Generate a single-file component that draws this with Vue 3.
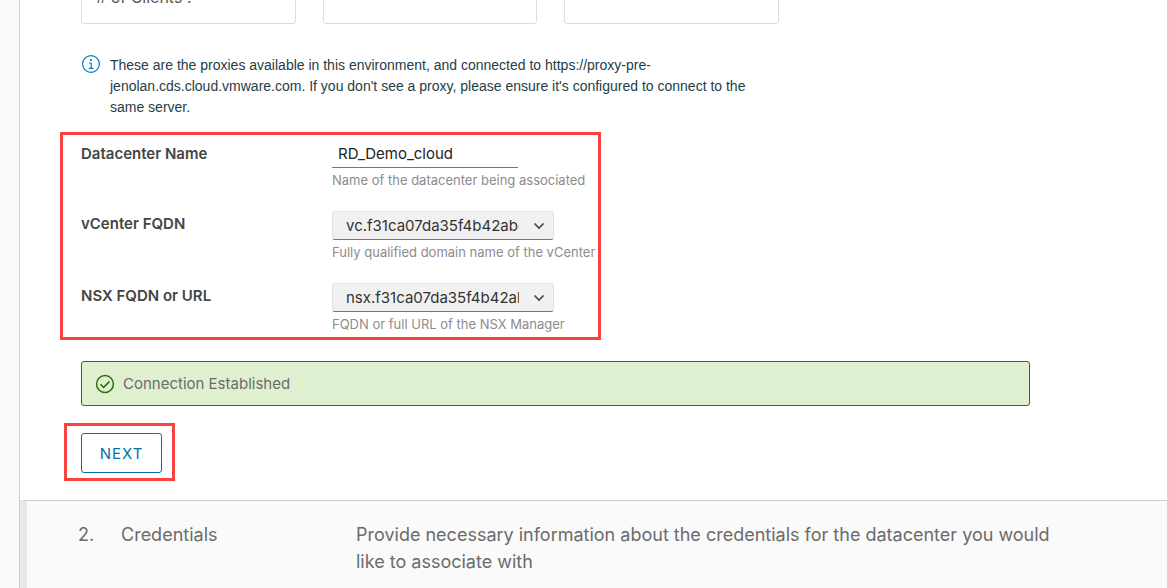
<script setup>
import { ref } from 'vue'

const proxies = ['# of Clients :', '', '']
const name = ref('RD_Demo_cloud')
const vcenter = ref('vc.f31ca07da35f4b42abe')
const nsx = ref('nsx.f31ca07da35f4b42abe')
</script>

<template>
  <div class="page">
    <main class="wizard">
      <section class="step">
        <div class="proxies">
          <div v-for="(label, i) in proxies" :key="i" class="proxy">{{ label }}</div>
        </div>

        <div class="hint">
          <svg class="icon" viewBox="0 0 20 20" aria-hidden="true">
            <circle cx="10" cy="10" r="8.4" fill="none" stroke="currentColor" stroke-width="1.2" />
            <circle cx="9.9" cy="6" r="1.1" fill="currentColor" />
            <path d="M8 9h2.2v5.2M7.8 14.4h4.6" fill="none" stroke="currentColor" stroke-width="1.2" />
          </svg>
          <p>These are the proxies available in this environment, and connected to https://proxy-pre-jenolan.cds.cloud.vmware.com. If you don't see a proxy, please ensure it's configured to connect to the same server.</p>
        </div>

        <form class="fields marked" @submit.prevent>
          <div class="field">
            <label for="dc-name">Datacenter Name</label>
            <div class="control">
              <input id="dc-name" v-model="name" type="text" />
              <span class="helper">Name of the datacenter being associated</span>
            </div>
          </div>
          <div class="field">
            <label for="vcenter">vCenter FQDN</label>
            <div class="control">
              <div class="select">
                <select id="vcenter" v-model="vcenter">
                  <option>vc.f31ca07da35f4b42abe</option>
                </select>
                <svg viewBox="0 0 12 8" aria-hidden="true"><path d="M1.5 1.5 6 6l4.5-4.5" /></svg>
              </div>
              <span class="helper">Fully qualified domain name of the vCenter</span>
            </div>
          </div>
          <div class="field">
            <label for="nsx">NSX FQDN or URL</label>
            <div class="control">
              <div class="select">
                <select id="nsx" v-model="nsx">
                  <option>nsx.f31ca07da35f4b42abe</option>
                </select>
                <svg viewBox="0 0 12 8" aria-hidden="true"><path d="M1.5 1.5 6 6l4.5-4.5" /></svg>
              </div>
              <span class="helper">FQDN or full URL of the NSX Manager</span>
            </div>
          </div>
        </form>

        <div class="alert" role="status">
          <svg class="icon" viewBox="0 0 20 20" aria-hidden="true">
            <circle cx="10" cy="10" r="8.4" fill="none" stroke="currentColor" stroke-width="1.5" />
            <path d="M5.4 10.3l3.2 3.1 6-6" fill="none" stroke="currentColor" stroke-width="1.5" />
          </svg>
          <span>Connection Established</span>
        </div>

        <div class="actions marked">
          <button type="button">NEXT</button>
        </div>
      </section>

      <section class="next-step">
        <span class="number">2.</span>
        <span class="title">Credentials</span>
        <p>Provide necessary information about the credentials for the datacenter you would like to associate with</p>
      </section>
    </main>
  </div>
</template>

<style>
body {
  background: #fafafa;
}
</style>

<style scoped>
.page {
  min-height: 100vh;
  display: flex;
  padding-left: 19px;
  font-family: Inter, "Noto Sans", sans-serif;
  font-size: 15px;
  color: #6b6b6b;
  box-sizing: border-box;
}
.wizard {
  flex: 1;
  display: flex;
  flex-direction: column;
  border-left: 1px solid #ccc;
}
.step {
  background: #fff;
  padding: 0 137px 19px 40px;
}
.proxies {
  display: flex;
  align-items: flex-end;
  gap: 27px;
  height: 24px;
  max-width: 698px;
  margin-left: 21px;
  overflow: hidden;
}
.proxy {
  flex: 1;
  height: 60px;
  padding: 22px 14px 0;
  font-size: 16px;
  line-height: 20px;
  box-sizing: border-box;
  border: 1px solid #ddd;
  border-radius: 3px;
  color: #565656;
}
.icon {
  width: 20px;
  height: 20px;
  flex: none;
}
.hint {
  display: flex;
  gap: 9px;
  max-width: 690px;
  margin: 30px 0 14px 21px;
}
.hint .icon {
  color: #0079b8;
}
.hint p {
  margin: 1px 0 0;
  font: 14px/21px "Liberation Sans", Arial, sans-serif;
  color: #253d47;
}
.marked {
  border: 3px solid #fc4141;
}
.fields {
  display: flex;
  flex-direction: column;
  gap: 18px;
  width: fit-content;
  padding: 6px 3px 0 18px;
}
.field {
  display: grid;
  grid-template-columns: 251px 1fr;
}
.field label {
  line-height: 26px;
  font-weight: 600;
  color: #454545;
}
.control {
  display: flex;
  flex-direction: column;
  align-items: flex-start;
}
input {
  width: 186px;
  height: 27px;
  padding: 0 6px 1px;
  box-sizing: border-box;
  border: 0;
  border-bottom: 1px solid #6a7a81;
  background: transparent;
  font: inherit;
  color: #222;
}
.select {
  position: relative;
}
select {
  display: block;
  width: 222px;
  height: 29px;
  padding: 0 34px 1px 13px;
  box-sizing: border-box;
  appearance: none;
  border: 1px solid #e2e2e2;
  border-bottom-color: #6a7a81;
  border-radius: 3px;
  background: #f1f1f1;
  font: inherit;
  color: #333;
}
.select svg {
  position: absolute;
  right: 9px;
  top: 11px;
  width: 12px;
  height: 8px;
  fill: none;
  stroke: #454545;
  stroke-width: 1.6;
  pointer-events: none;
}
.helper {
  font-size: 13px;
  line-height: 25px;
  color: #8c8c8c;
}
.alert {
  display: flex;
  align-items: center;
  gap: 8px;
  height: 45px;
  box-sizing: border-box;
  margin: 21px 0 17px 21px;
  padding: 0 13px;
  border: 1px solid #2f6f07;
  border-radius: 3px;
  background: #dff0d0;
}
.alert .icon {
  color: #2f6f07;
}
.actions {
  width: fit-content;
  margin-left: 4px;
  padding: 7px 10px 5px 14px;
}
button {
  display: block;
  min-width: 81px;
  height: 40px;
  padding: 0 17px;
  border: 1px solid #0072a3;
  border-radius: 3px;
  background: #fff;
  font: inherit;
  letter-spacing: 1px;
  color: #0072a3;
}
.next-step {
  flex: 1;
  display: flex;
  padding: 20px 96px 12px 51px;
  border-top: 1px solid #ccc;
  border-left: 7px solid #e8e8e8;
  font-size: 18px;
  line-height: 27px;
}
.number {
  width: 43px;
}
.title {
  width: 235px;
}
.next-step p {
  flex: 1;
  margin: 0;
}
</style>
